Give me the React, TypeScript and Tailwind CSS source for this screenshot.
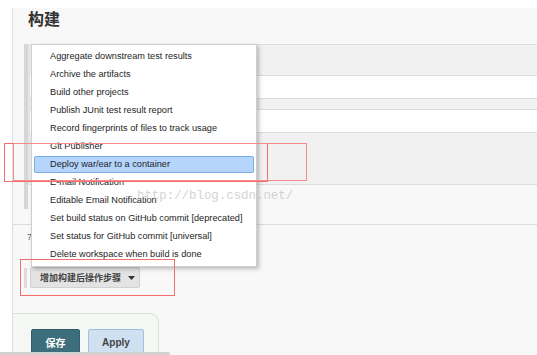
const MENU_ITEMS = [
  'Aggregate downstream test results',
  'Archive the artifacts',
  'Build other projects',
  'Publish JUnit test result report',
  'Record fingerprints of files to track usage',
  'Git Publisher',
  'Deploy war/ear to a container',
  'E-mail Notification',
  'Editable Email Notification',
  'Set build status on GitHub commit [deprecated]',
  'Set status for GitHub commit [universal]',
  'Delete workspace when build is done',
];

const SELECTED = 6;

function PostBuildMenu() {
  return (
    <div className="absolute left-[31px] top-[44px] w-[226px] bg-white border border-[#cfcfcf] shadow-[2px_2px_4px_rgba(0,0,0,0.25)] pt-[2px] pb-[3px]">
      {MENU_ITEMS.map((item, i) => (
        <div key={item} className="h-[18px] px-[2px] flex items-center">
          <div
            className={
              i === SELECTED
                ? 'w-full h-[17px] flex items-center pl-[15px] pt-[1px] bg-[#b5d5fd] border border-[#7aaeea] rounded-[2px]'
                : 'w-full h-[17px] flex items-center pl-[16px] pt-[2px]'
            }
          >
            <span className="text-[9.2px] text-[#1e1e1e] whitespace-nowrap">{item}</span>
          </div>
        </div>
      ))}
    </div>
  );
}

export default function App() {
  return (
    <div className="relative w-[537px] h-[355px] overflow-hidden bg-white font-['Liberation_Sans','Noto_Sans_CJK_SC',sans-serif]">
      <div className="flex h-full pt-[8px]">
        <div className="w-[12px] shrink-0" />
        <div className="flex-1 flex flex-col border-l border-[#dedede] bg-[#f8f8f8]">
          {/* Heading */}
          <div className="h-[36px] shrink-0 pl-[15px] pt-[1px]">
            <h2 className="text-[16px] font-bold text-[#333] leading-[18px] font-['Noto_Sans_CJK_SC',sans-serif]">构建</h2>
          </div>

          {/* Build step block */}
          <div className="flex items-start h-[165px] shrink-0">
            <div className="w-[11px] shrink-0" />
            <div className="w-[4px] shrink-0 h-[165px] bg-[#d6d6d6]" />
            <div className="w-[2px] shrink-0 h-[141px] bg-[#e6e6e6]" />
            <div className="flex-1 flex flex-col h-[141px] bg-[#f1f1f1] border-y border-[#dcdcdc]">
              <div className="h-[30px]" />
              <div className="h-[24px] bg-white border-y border-[#dcdcdc]" />
              <div className="h-[10px]" />
              <div className="h-[24px] bg-white border-y border-[#dcdcdc]" />
            </div>
          </div>
          <div className="h-[16px] shrink-0 border-b border-[#dcdcdc]" />

          {/* Post-build area */}
          <div className="mt-[4px] pl-[14px] h-[16px] shrink-0 text-[9px] text-[#666] leading-[16px]">7</div>
          <div className="h-[22px] shrink-0" />
          <div className="flex items-center pl-[11px] shrink-0">
            <div className="w-[3px] h-[20px] bg-[#dcdcdc]" />
            <button className="ml-[3px] w-[110px] h-[21px] pl-[9px] flex items-center gap-[7px] bg-[#e3e3e3] border border-[#d2d2d2] rounded-[2px] text-[9px] font-bold text-[#444] font-['Noto_Sans_CJK_SC',sans-serif]">
              增加构建后操作步骤
              <svg width="7" height="4" viewBox="0 0 7 4">
                <path d="M0 0h7L3.5 4z" fill="#333" />
              </svg>
            </button>
          </div>
          <div className="h-[25px] shrink-0" />

          {/* Save / Apply bar */}
          <div className="w-[146px] flex-1 border-t border-r border-[#d3e2d3] rounded-tr-[9px] bg-[#f5f7f5] pl-[18px] pt-[15px] flex items-start gap-[8px]">
            <button className="w-[49px] h-[30px] bg-[#3d6e7c] rounded-[2px] border border-[#325d6a] text-white text-[10px] font-bold font-['Noto_Sans_CJK_SC',sans-serif] pb-[3px]">
              保存
            </button>
            <button className="w-[56px] h-[30px] bg-[#cfe0f1] rounded-[2px] border border-[#9fc0e2] text-[#444] text-[10px] font-bold pb-[3px]">
              Apply
            </button>
          </div>
        </div>
      </div>

      <PostBuildMenu />

      {/* Scroll shadow */}
      <div className="absolute left-0 top-[352px] w-[170px] h-[3px] bg-[#d2d2d2] rounded-r-full" />

      {/* Red highlight boxes */}
      <div className="absolute left-[4px] top-[143px] w-[264px] h-[39px] border border-[#f26d6d]" />
      <div className="absolute left-[13px] top-[143px] w-[294px] h-[38px] border border-[#f58a8a]" />
      <div className="absolute left-[20px] top-[259px] w-[155px] h-[37px] border border-[#f26d6d]" />

      {/* Watermark */}
      <div className="absolute left-[137px] top-[189px] text-[12.4px] leading-[14px] text-[#b8b8b8] opacity-60 font-['Liberation_Mono',monospace] pointer-events-none">
        http://blog.csdn.net/
      </div>
    </div>
  );
}
